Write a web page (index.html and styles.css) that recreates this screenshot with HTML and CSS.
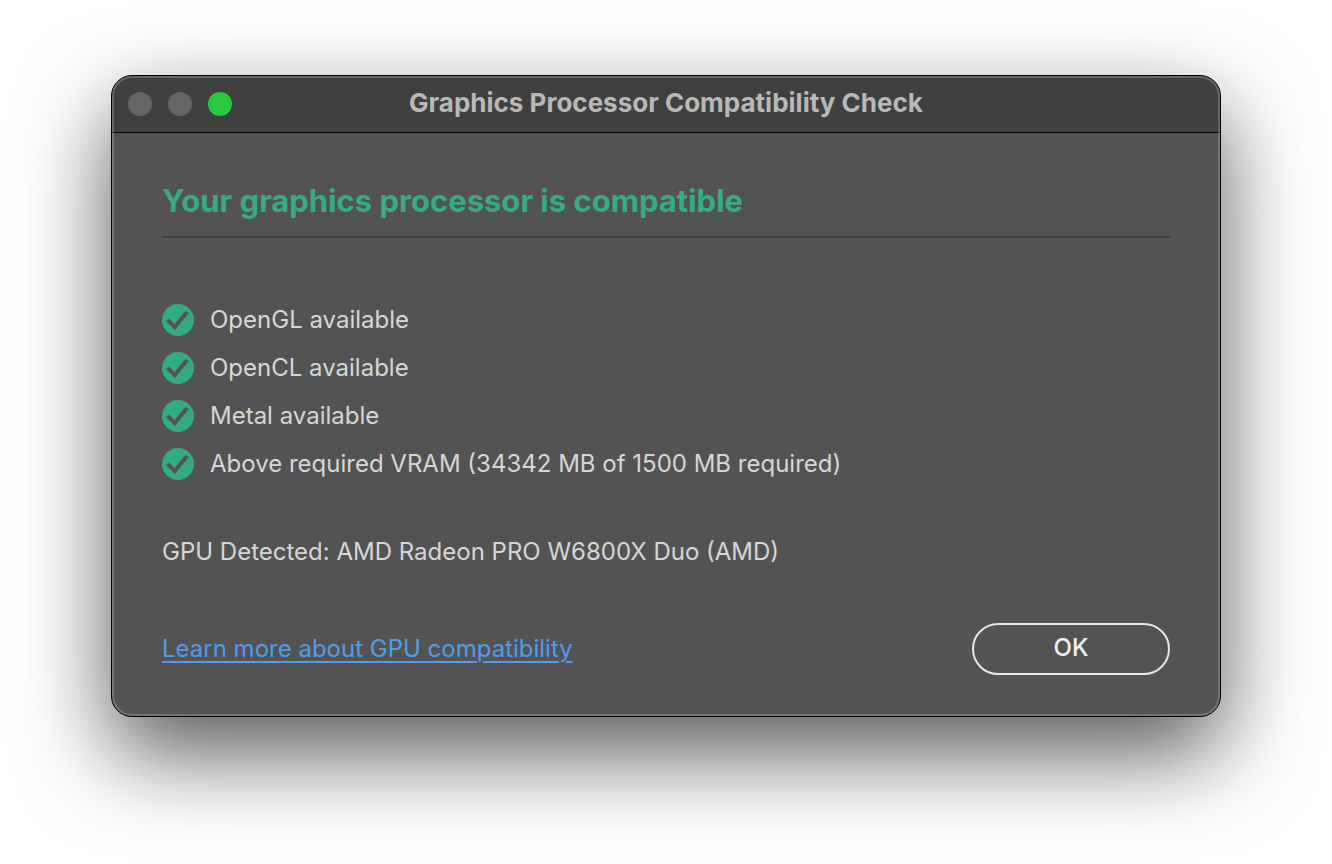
FILE: index.html
```html
<!DOCTYPE html>
<html lang="en">
<head>
    <meta charset="UTF-8">
    <meta name="viewport" content="width=device-width, initial-scale=1.0">
    <title>Graphics Processor Compatibility Check</title>
    <link rel="stylesheet" href="styles.css">
</head>
<body>
    <!-- Shared check icon -->
    <svg class="sprite" aria-hidden="true">
        <symbol id="check" viewBox="0 0 32 32">
            <circle cx="16" cy="16" r="16" fill="#33ab84"/>
            <path d="M5.4 15.8 12.7 23 25.2 8" fill="none" stroke="#535353" stroke-width="4"/>
        </symbol>
    </svg>

    <main class="dialog">
        <!-- Title Bar -->
        <header class="title-bar">
            <div class="window-buttons">
                <button class="dot" aria-label="Close" disabled></button>
                <button class="dot" aria-label="Minimize" disabled></button>
                <button class="dot dot-zoom" aria-label="Zoom"></button>
            </div>
            <h1>Graphics Processor Compatibility Check</h1>
        </header>

        <div class="content">
            <h2>Your graphics processor is compatible</h2>

            <!-- Check Results -->
            <ul class="checks">
                <li><svg class="icon"><use href="#check"/></svg><span>OpenGL available</span></li>
                <li><svg class="icon"><use href="#check"/></svg><span>OpenCL available</span></li>
                <li><svg class="icon"><use href="#check"/></svg><span>Metal available</span></li>
                <li><svg class="icon"><use href="#check"/></svg><span>Above required VRAM (34342 MB of 1500 MB required)</span></li>
            </ul>

            <p class="gpu">GPU Detected: AMD Radeon PRO W6800X Duo (AMD)</p>

            <footer class="actions">
                <a href="#">Learn more about GPU compatibility</a>
                <button class="ok-button">OK</button>
            </footer>
        </div>
    </main>
</body>
</html>
```
FILE: styles.css
```css
/* Basic Reset */
* {
    margin: 0;
    padding: 0;
    box-sizing: border-box;
}

body {
    min-height: 100vh;
    padding: 75px 111px;
    background-color: #fff;
    font-family: Inter, "Liberation Sans", sans-serif;
    font-size: 24px;
    line-height: 32px;
    color: #d6d6d6;
}

.sprite {
    position: absolute;
    width: 0;
    height: 0;
}

/* Window */
.dialog {
    position: relative;
    border: 1px solid #000;
    border-radius: 21px;
    background-color: #535353;
    box-shadow: 0 36px 90px rgba(0, 0, 0, 0.66);
    overflow: hidden;
}

/* Light rim over the title bar and content */
.dialog::after {
    content: "";
    position: absolute;
    inset: 0;
    border: 2px solid rgba(255, 255, 255, 0.2);
    border-radius: 20px;
    pointer-events: none;
}

/* Title Bar */
.title-bar {
    display: grid;
    grid-template-columns: 1fr auto 1fr;
    align-items: center;
    height: 57px;
    padding: 0 16px;
    border-bottom: 1px solid #000;
    background-color: #404040;
}
.title-bar h1 {
    padding-bottom: 2px;
    font-size: 26px;
    font-weight: 700;
    color: #b8b8b8;
}
.window-buttons {
    display: flex;
    gap: 16px;
}
.dot {
    width: 24px;
    height: 24px;
    border: none;
    border-radius: 50%;
    background-color: #656565;
}
.dot-zoom {
    background-color: #28c840;
}

/* Content */
.content {
    padding: 48px 50px 41px;
}
.content h2 {
    padding-bottom: 15px;
    border-bottom: 2px solid #404040;
    font-size: 31px;
    font-weight: 700;
    line-height: 40px;
    color: #36ab85;
}

.checks {
    display: grid;
    gap: 16px;
    margin-top: 66px;
    list-style: none;
}
.checks li {
    display: flex;
    align-items: center;
    gap: 16px;
}
.icon {
    flex: none;
    width: 32px;
    height: 32px;
}

.gpu {
    margin-top: 56px;
}

/* Link and OK button */
.actions {
    display: flex;
    justify-content: space-between;
    align-items: center;
    margin-top: 55px;
}
.actions a {
    color: #4f9de8;
    text-decoration-thickness: 2px;
    text-underline-offset: 4px;
}
.ok-button {
    width: 198px;
    height: 52px;
    padding-bottom: 2px;
    border: 2px solid #e6e6e6;
    border-radius: 26px;
    background: none;
    font: inherit;
    font-weight: 500;
    color: #f0f0f0;
    cursor: pointer;
}
```
